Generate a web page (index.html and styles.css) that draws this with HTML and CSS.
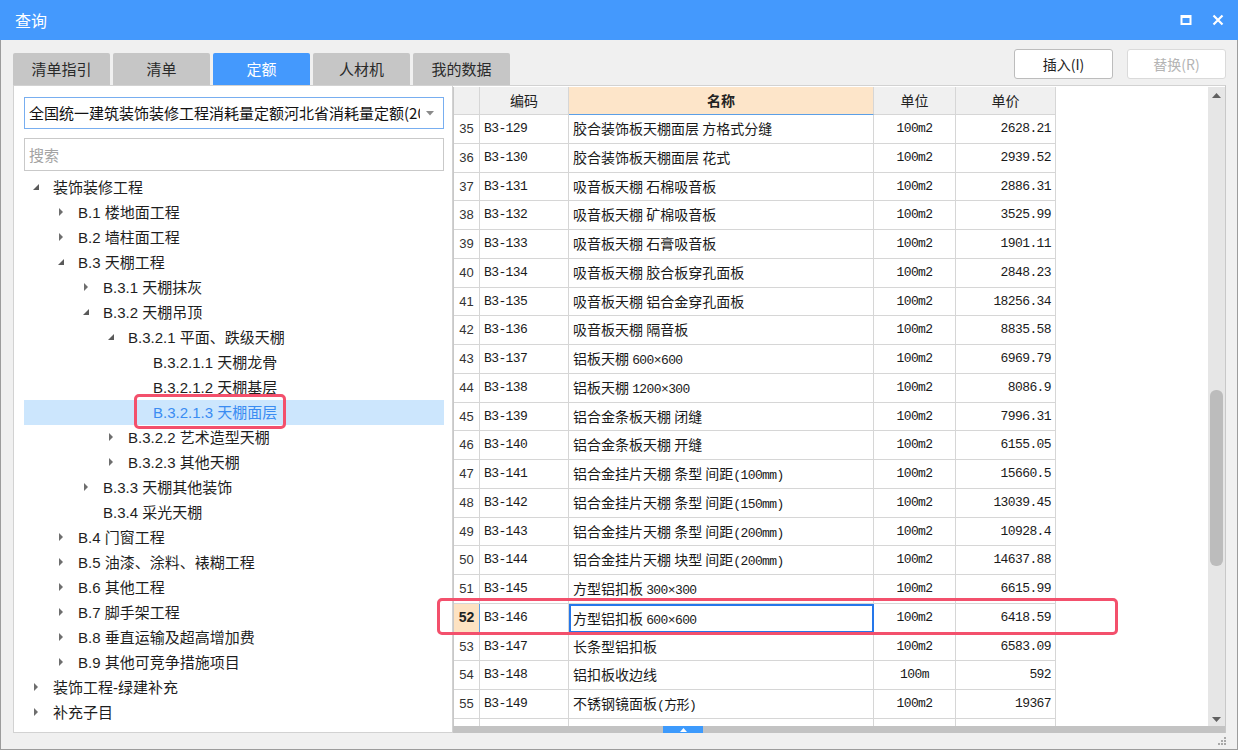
FILE: index.html
```html
<!DOCTYPE html>
<html lang="zh">
<head>
<meta charset="utf-8">
<title>查询</title>
<link rel="stylesheet" href="styles.css">
</head>
<body>
<div class="dialog">
  <div class="titlebar">
    <span class="title">查询</span>
    <div class="winctl">
      <svg class="ico-max" width="12" height="12" viewBox="0 0 12 12"><rect x="1.5" y="2" width="9" height="8" fill="none" stroke="#fff" stroke-width="2"/><rect x="1" y="1" width="10" height="3" fill="#fff"/></svg>
      <svg class="ico-close" width="12" height="12" viewBox="0 0 12 12"><path d="M1.5 1.5 L10.5 10.5 M10.5 1.5 L1.5 10.5" stroke="#fff" stroke-width="2.2" fill="none"/></svg>
    </div>
  </div>
  <div class="main">
    <div class="topbar">
      <div class="tabs">
        <div class="tab">清单指引</div>
        <div class="tab">清单</div>
        <div class="tab active">定额</div>
        <div class="tab">人材机</div>
        <div class="tab">我的数据</div>
      </div>
      <div class="actions">
        <button class="btn">插入(I)</button>
        <button class="btn disabled">替换(R)</button>
      </div>
    </div>
    <div class="panels">
      <div class="left">
        <div class="select">
          <span class="select-text">全国统一建筑装饰装修工程消耗量定额河北省消耗量定额(2017)</span>
          <svg class="caret" width="8" height="5" viewBox="0 0 8 5"><path d="M0 0 H8 L4 4.5 Z" fill="#8a8a8a"/></svg>
        </div>
        <div class="search">搜索</div>
        <ul class="tree">
          <li class="node l0 open"><i class="tw"></i><span>装饰装修工程</span></li>
          <li class="node l1 closed"><i class="tw"></i><span>B.1 楼地面工程</span></li>
          <li class="node l1 closed"><i class="tw"></i><span>B.2 墙柱面工程</span></li>
          <li class="node l1 open"><i class="tw"></i><span>B.3 天棚工程</span></li>
          <li class="node l2 closed"><i class="tw"></i><span>B.3.1 天棚抹灰</span></li>
          <li class="node l2 open"><i class="tw"></i><span>B.3.2 天棚吊顶</span></li>
          <li class="node l3 open"><i class="tw"></i><span>B.3.2.1 平面、跌级天棚</span></li>
          <li class="node l4"><i class="tw"></i><span>B.3.2.1.1 天棚龙骨</span></li>
          <li class="node l4"><i class="tw"></i><span>B.3.2.1.2 天棚基层</span></li>
          <li class="node l4 selected"><i class="tw"></i><span class="mark">B.3.2.1.3 天棚面层</span></li>
          <li class="node l3 closed"><i class="tw"></i><span>B.3.2.2 艺术造型天棚</span></li>
          <li class="node l3 closed"><i class="tw"></i><span>B.3.2.3 其他天棚</span></li>
          <li class="node l2 closed"><i class="tw"></i><span>B.3.3 天棚其他装饰</span></li>
          <li class="node l2"><i class="tw"></i><span>B.3.4 采光天棚</span></li>
          <li class="node l1 closed"><i class="tw"></i><span>B.4 门窗工程</span></li>
          <li class="node l1 closed"><i class="tw"></i><span>B.5 油漆、涂料、裱糊工程</span></li>
          <li class="node l1 closed"><i class="tw"></i><span>B.6 其他工程</span></li>
          <li class="node l1 closed"><i class="tw"></i><span>B.7 脚手架工程</span></li>
          <li class="node l1 closed"><i class="tw"></i><span>B.8 垂直运输及超高增加费</span></li>
          <li class="node l1 closed"><i class="tw"></i><span>B.9 其他可竞争措施项目</span></li>
          <li class="node l0 closed"><i class="tw"></i><span>装饰工程-绿建补充</span></li>
          <li class="node l0 closed"><i class="tw"></i><span>补充子目</span></li>
        </ul>
      </div>
      <div class="right">
        <div class="grid-area">
          <div class="table">
            <div class="row head">
              <div class="c n"></div><div class="c code">编码</div><div class="c name sorted">名称</div><div class="c unit">单位</div><div class="c price">单价</div>
            </div>
            <div class="row"><div class="c n">35</div><div class="c code">B3-129</div><div class="c name">胶合装饰板天棚面层 方格式分缝</div><div class="c unit">100m2</div><div class="c price">2628.21</div></div>
            <div class="row"><div class="c n">36</div><div class="c code">B3-130</div><div class="c name">胶合装饰板天棚面层 花式</div><div class="c unit">100m2</div><div class="c price">2939.52</div></div>
            <div class="row"><div class="c n">37</div><div class="c code">B3-131</div><div class="c name">吸音板天棚 石棉吸音板</div><div class="c unit">100m2</div><div class="c price">2886.31</div></div>
            <div class="row"><div class="c n">38</div><div class="c code">B3-132</div><div class="c name">吸音板天棚 矿棉吸音板</div><div class="c unit">100m2</div><div class="c price">3525.99</div></div>
            <div class="row"><div class="c n">39</div><div class="c code">B3-133</div><div class="c name">吸音板天棚 石膏吸音板</div><div class="c unit">100m2</div><div class="c price">1901.11</div></div>
            <div class="row"><div class="c n">40</div><div class="c code">B3-134</div><div class="c name">吸音板天棚 胶合板穿孔面板</div><div class="c unit">100m2</div><div class="c price">2848.23</div></div>
            <div class="row"><div class="c n">41</div><div class="c code">B3-135</div><div class="c name">吸音板天棚 铝合金穿孔面板</div><div class="c unit">100m2</div><div class="c price">18256.34</div></div>
            <div class="row"><div class="c n">42</div><div class="c code">B3-136</div><div class="c name">吸音板天棚 隔音板</div><div class="c unit">100m2</div><div class="c price">8835.58</div></div>
            <div class="row"><div class="c n">43</div><div class="c code">B3-137</div><div class="c name">铝板天棚 <span class="m">600×600</span></div><div class="c unit">100m2</div><div class="c price">6969.79</div></div>
            <div class="row"><div class="c n">44</div><div class="c code">B3-138</div><div class="c name">铝板天棚 <span class="m">1200×300</span></div><div class="c unit">100m2</div><div class="c price">8086.9</div></div>
            <div class="row"><div class="c n">45</div><div class="c code">B3-139</div><div class="c name">铝合金条板天棚 闭缝</div><div class="c unit">100m2</div><div class="c price">7996.31</div></div>
            <div class="row"><div class="c n">46</div><div class="c code">B3-140</div><div class="c name">铝合金条板天棚 开缝</div><div class="c unit">100m2</div><div class="c price">6155.05</div></div>
            <div class="row"><div class="c n">47</div><div class="c code">B3-141</div><div class="c name">铝合金挂片天棚 条型 间距<span class="m">(100mm)</span></div><div class="c unit">100m2</div><div class="c price">15660.5</div></div>
            <div class="row"><div class="c n">48</div><div class="c code">B3-142</div><div class="c name">铝合金挂片天棚 条型 间距<span class="m">(150mm)</span></div><div class="c unit">100m2</div><div class="c price">13039.45</div></div>
            <div class="row"><div class="c n">49</div><div class="c code">B3-143</div><div class="c name">铝合金挂片天棚 条型 间距<span class="m">(200mm)</span></div><div class="c unit">100m2</div><div class="c price">10928.4</div></div>
            <div class="row"><div class="c n">50</div><div class="c code">B3-144</div><div class="c name">铝合金挂片天棚 块型 间距<span class="m">(200mm)</span></div><div class="c unit">100m2</div><div class="c price">14637.88</div></div>
            <div class="row"><div class="c n">51</div><div class="c code">B3-145</div><div class="c name">方型铝扣板 <span class="m">300×300</span></div><div class="c unit">100m2</div><div class="c price">6615.99</div></div>
            <div class="row current"><div class="c n">52</div><div class="c code">B3-146</div><div class="c name focus">方型铝扣板 <span class="m">600×600</span></div><div class="c unit">100m2</div><div class="c price">6418.59</div></div>
            <div class="row"><div class="c n">53</div><div class="c code">B3-147</div><div class="c name">长条型铝扣板</div><div class="c unit">100m2</div><div class="c price">6583.09</div></div>
            <div class="row"><div class="c n">54</div><div class="c code">B3-148</div><div class="c name">铝扣板收边线</div><div class="c unit">100m</div><div class="c price">592</div></div>
            <div class="row"><div class="c n">55</div><div class="c code">B3-149</div><div class="c name">不锈钢镜面板<span class="m">(方形)</span></div><div class="c unit">100m2</div><div class="c price">19367</div></div>
            <div class="row"><div class="c n"></div><div class="c code"></div><div class="c name"></div><div class="c unit"></div><div class="c price"></div></div>
          </div>
          <div class="vscroll">
            <svg class="arrow" width="9" height="5" viewBox="0 0 9 5"><path d="M0 5 L4.5 0 L9 5 Z" fill="#606060"/></svg>
            <div class="track"><div class="thumb"></div></div>
            <svg class="arrow" width="9" height="5" viewBox="0 0 9 5"><path d="M0 0 L9 0 L4.5 5 Z" fill="#606060"/></svg>
          </div>
        </div>
        <div class="hbar"><span class="hbar-btn"><svg width="7" height="4" viewBox="0 0 7 4"><path d="M0 4 L3.5 0 L7 4 Z" fill="#fff"/></svg></span></div>
      </div>
      <div class="hl-box"></div>
    </div>
    <div class="footer">
      <svg class="grip" width="10" height="10" viewBox="0 0 10 10" fill="#a8a8a8"><rect x="7" y="1" width="2" height="2"/><rect x="4" y="4" width="2" height="2"/><rect x="7" y="4" width="2" height="2"/><rect x="1" y="7" width="2" height="2"/><rect x="4" y="7" width="2" height="2"/><rect x="7" y="7" width="2" height="2"/></svg>
    </div>
  </div>
</div>
</body>
</html>
```

FILE: styles.css
```css
* { box-sizing: border-box; }
html, body { margin: 0; padding: 0; }
body {
  width: 1238px;
  height: 750px;
  overflow: hidden;
  background: #f0f0f0;
  font-family: "Liberation Sans", "Noto Sans CJK SC", sans-serif;
  color: #1e1e1e;
}
.dialog {
  width: 1238px;
  height: 750px;
  border: 1px solid #9c9c9c;
  border-top: none;
  background: #f0f0f0;
  display: flex;
  flex-direction: column;
}
.titlebar {
  height: 40px;
  margin: 0 -1px;
  background: #4499fd;
  display: flex;
  align-items: center;
  justify-content: space-between;
  padding: 0 14px 0 15px;
}
.title {
  color: #fff;
  font-family: "Noto Sans CJK SC", sans-serif;
  font-size: 16px;
  line-height: 20px;
}
.winctl { display: flex; gap: 20px; align-items: center; }
.winctl svg { display: block; }

.main {
  flex: 1;
  display: flex;
  flex-direction: column;
  padding: 9px 11px 0 12px;
}
.topbar {
  height: 36px;
  display: flex;
  justify-content: space-between;
}
.tabs {
  align-self: flex-end;
  display: flex;
  gap: 3px;
}
.tab {
  width: 97px;
  height: 32px;
  background: #c6c6c6;
  border-radius: 2px 2px 0 0;
  font-family: "Noto Sans CJK SC", sans-serif;
  font-size: 15px;
  line-height: 32px;
  text-align: center;
  color: #2a2a2a;
}
.tab.active { background: #4499fd; color: #fff; }
.actions {
  display: flex;
  gap: 14px;
  align-self: flex-start;
}
.btn {
  width: 99px;
  height: 30px;
  background: #fff;
  border: 1px solid #bcbcbc;
  border-radius: 3px;
  font-family: "Noto Sans CJK SC", sans-serif;
  font-size: 14px;
  color: #222;
  padding: 0;
}
.btn.disabled { color: #b4b4b4; border-color: #dadada; }

.panels {
  height: 648px;
  display: flex;
  position: relative;
}
.left {
  width: 440px;
  background: #fff;
  border: 1px solid #d2d2d2;
  padding: 11px 8px 0 10px;
}
.select {
  height: 32px;
  border: 1px solid #78aef0;
  display: flex;
  align-items: center;
  padding: 0 9px 0 4px;
  gap: 6px;
}
.select-text {
  flex: 1;
  overflow: hidden;
  white-space: nowrap;
  font-family: "Noto Sans CJK SC", sans-serif;
  font-size: 15px;
  line-height: 22px;
  color: #111;
}
.caret { flex: none; }
.search {
  margin-top: 9px;
  height: 33px;
  border: 1px solid #c9c9c9;
  padding: 0 4px;
  font-family: "Noto Sans CJK SC", sans-serif;
  font-size: 15px;
  line-height: 31px;
  color: #a3a3a3;
}
.tree {
  list-style: none;
  margin: 4px 0 0;
  padding: 0;
}
.node {
  height: 25px;
  display: flex;
  align-items: center;
  font-size: 15px;
  line-height: 25px;
  color: #1e1e1e;
  white-space: nowrap;
}
.node.l0 { padding-left: 9px; }
.node.l1 { padding-left: 34px; }
.node.l2 { padding-left: 59px; }
.node.l3 { padding-left: 84px; }
.node.l4 { padding-left: 109px; }
.tw {
  width: 20px;
  height: 25px;
  flex: none;
  position: relative;
}
.closed .tw::before {
  content: "";
  position: absolute;
  left: 1px;
  top: 8px;
  border-left: 4px solid #6e6e6e;
  border-top: 4px solid transparent;
  border-bottom: 4px solid transparent;
}
.open .tw::before {
  content: "";
  position: absolute;
  left: 0;
  top: 9px;
  border-bottom: 6px solid #5a5a5a;
  border-left: 6px solid transparent;
}
.node.selected { background: #cce6fd; color: #3a8cf2; }
.mark { position: relative; }
.mark::after {
  content: "";
  position: absolute;
  left: -19px;
  right: -9px;
  top: -6px;
  bottom: -4px;
  border: 3px solid #f3506c;
  border-radius: 5px;
}

.right {
  flex: 1;
  display: flex;
  flex-direction: column;
  border-top: 1px solid #d2d2d2;
  border-right: 1px solid #c8c8c8;
  background: #fff;
}
.grid-area {
  flex: 1;
  display: flex;
  min-height: 0;
  padding-top: 1px;
}
.table {
  flex: 1;
  overflow: hidden;
  background: #fff;
  border-left: 1px solid #c8c8c8;
}
.row {
  display: grid;
  grid-template-columns: 26px 89px 305px 82px 100px;
  height: 28.75px;
}
.row.head { height: 28px; }
.c {
  border-right: 1px solid #d6d6d6;
  border-bottom: 1px solid #d6d6d6;
  display: block;
  white-space: nowrap;
  overflow: hidden;
  font-size: 14px;
  line-height: 27px;
  color: #1a1a1a;
}
.row.head .c {
  background: #f0f0f0;
  text-align: center;
  padding: 0;
  font-family: "Noto Sans CJK SC", sans-serif;
  font-size: 14px;
  letter-spacing: 0;
  line-height: 26px;
  color: #222;
}
.row.head .c.sorted {
  background: #fde5c9;
  font-weight: bold;
  border-bottom: 1px solid #5b9fe6;
}
.c.n {
  text-align: center;
  font-family: "Liberation Sans", sans-serif;
  font-size: 13px;
  color: #333;
}
.c.code {
  padding-left: 4px;
  font-family: "Liberation Mono", monospace;
  font-size: 13px;
  letter-spacing: -0.6px;
}
.c.name {
  padding-left: 4px;
  font-family: "Noto Sans CJK SC", sans-serif;
  font-size: 14px;
}
.m {
  font-family: "Liberation Mono", "Noto Sans CJK SC", monospace;
  font-size: 13px;
  letter-spacing: -0.6px;
}
.c.unit {
  text-align: center;
  font-family: "Liberation Mono", monospace;
  font-size: 13px;
  letter-spacing: -0.6px;
}
.c.price {
  text-align: right;
  padding-right: 4px;
  font-family: "Liberation Mono", monospace;
  font-size: 13px;
  letter-spacing: -0.6px;
}
.current .c.n {
  background: #fde2c2;
  font-weight: bold;
  font-size: 14px;
  color: #222;
  border-right: 1px solid #5b9fe6;
}
.c.name.focus {
  border: 2px solid #2577ea;
  padding-left: 2px;
  line-height: 24px;
}
.vscroll {
  width: 17px;
  flex: none;
  background: #e6e6e6;
  display: flex;
  flex-direction: column;
  align-items: center;
  padding: 6px 0 4px;
}
.vscroll .arrow { flex: none; display: block; }
.track {
  flex: 1;
  width: 100%;
  padding: 0 2px 151px;
  display: flex;
  flex-direction: column;
  justify-content: flex-end;
}
.thumb {
  height: 176px;
  background: #bcbcbc;
  border-radius: 6px;
}
.hbar {
  height: 7px;
  background: #c3c3c3;
  display: flex;
  justify-content: center;
  padding-right: 312px;
}
.hbar-btn {
  width: 40px;
  height: 7px;
  background: #3d9afc;
  display: flex;
  align-items: center;
  justify-content: center;
}
.hbar-btn svg { display: block; }
.hl-box {
  position: absolute;
  left: 424px;
  top: 513px;
  width: 681px;
  height: 37px;
  border: 3px solid #f3506c;
  border-radius: 5px;
  pointer-events: none;
}
.footer {
  flex: 1;
  display: flex;
  justify-content: flex-end;
  align-items: center;
}
.grip { display: block; margin-right: -1px; }
```
